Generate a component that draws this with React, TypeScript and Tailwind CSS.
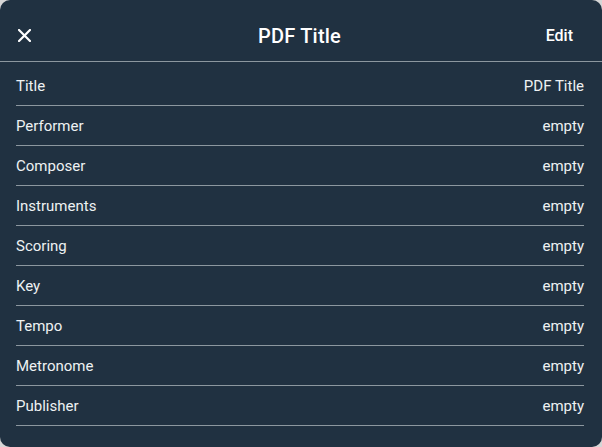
const rows: { label: string; value: string }[] = [
  { label: 'Title', value: 'PDF Title' },
  { label: 'Performer', value: 'empty' },
  { label: 'Composer', value: 'empty' },
  { label: 'Instruments', value: 'empty' },
  { label: 'Scoring', value: 'empty' },
  { label: 'Key', value: 'empty' },
  { label: 'Tempo', value: 'empty' },
  { label: 'Metronome', value: 'empty' },
  { label: 'Publisher', value: 'empty' },
];

export default function App() {
  return (
    <div className="w-[602px] h-[447px] bg-[#d6d6d6] font-['Roboto',sans-serif]">
      <div className="w-full h-full rounded-[10px] bg-[#203141] overflow-hidden text-white">
        {/* header */}
        <div className="h-[62px] pt-[10px] grid grid-cols-[1fr_auto_1fr] items-center pl-[18px] pr-[29px] border-b border-[#8c979f]">
          <button className="w-[13px] h-[13px] flex items-center justify-center">
            <svg width="13" height="13" viewBox="0 0 13 13" fill="none">
              <path d="M1 1L12 12M12 1L1 12" stroke="white" strokeWidth="2.2" strokeLinecap="square" />
            </svg>
          </button>
          <div className="text-[20px] font-medium tracking-[0.2px] ml-[8px]">PDF Title</div>
          <div className="flex justify-end">
            <button className="text-[16px] font-medium">Edit</button>
          </div>
        </div>

        {/* metadata rows */}
        <div className="pt-[4px]">
          {rows.map((r) => (
            <div
              key={r.label}
              className="ml-4 mr-[18px] h-[40px] flex items-center justify-between border-b border-[#8c979f] pt-[1px] text-[15px] text-[#eef1f3]"
            >
              <span>{r.label}</span>
              <span>{r.value}</span>
            </div>
          ))}
        </div>
      </div>
    </div>
  );
}
